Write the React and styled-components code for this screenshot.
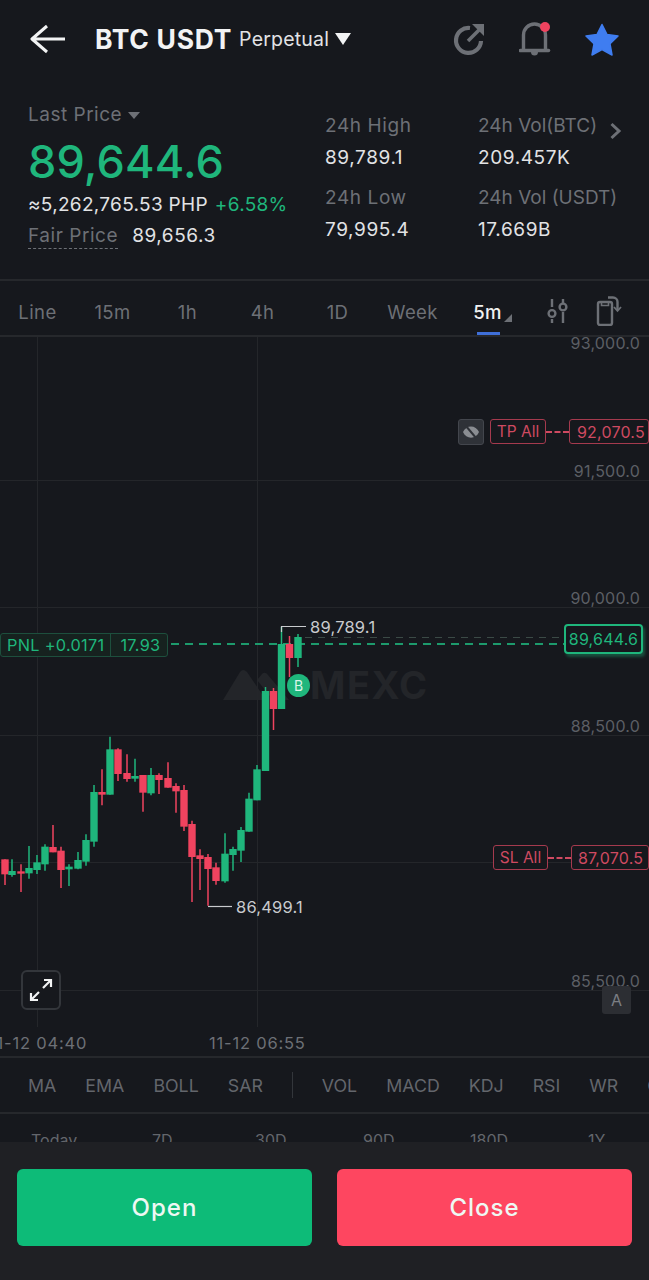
import React from "react";
import styled, { createGlobalStyle } from "styled-components";

const GREEN = "#1fb67c";
const RED = "#f0435f";
const BG = "#16181d";

const GlobalStyle = createGlobalStyle`
  html, body {
    margin: 0;
    padding: 0;
    background: ${BG};
  }
  * { box-sizing: border-box; }
`;

const Page = styled.div`
  width: 649px;
  height: 1280px;
  overflow: hidden;
  display: flex;
  flex-direction: column;
  background: ${BG};
  font-family: "Inter", "Liberation Sans", sans-serif;
  color: #e2e3e5;
`;

/* header */
const Header = styled.div`
  height: 78px;
  flex: none;
  display: flex;
  align-items: center;
  padding: 0 30px;
`;
const Title = styled.div`
  margin-left: 29px;
  font-size: 26.5px;
  font-weight: 700;
  color: #f2f3f4;
  letter-spacing: 0.7px;
`;
const Perpetual = styled.div`
  margin-left: 7px;
  font-size: 19.5px;
  letter-spacing: 0.2px;
  color: #e2e3e5;
`;
const Caret = styled.span`
  width: 0;
  height: 0;
  margin-left: 6px;
  border-left: 8.5px solid transparent;
  border-right: 8.5px solid transparent;
  border-top: 12px solid #f2f3f4;
`;
const HeaderIcons = styled.div`
  margin-left: auto;
  display: flex;
  align-items: center;
  gap: 33px;
`;

/* stats */
const Stats = styled.div`
  height: 203px;
  flex: none;
  display: flex;
  padding: 24px 0 0 28px;
  border-bottom: 2px solid #26282c;
`;
const PriceCol = styled.div`
  width: 297px;
`;
const LastPrice = styled.div`
  display: flex;
  align-items: center;
  gap: 6px;
  font-size: 19px;
  letter-spacing: 0.5px;
  line-height: 26px;
  color: #6d7076;
`;
const SmallCaret = styled.span`
  width: 0;
  height: 0;
  border-left: 6.5px solid transparent;
  border-right: 6.5px solid transparent;
  border-top: 7px solid #6d7076;
`;
const BigPrice = styled.div`
  margin-top: 7px;
  font-size: 45px;
  line-height: 54px;
  font-weight: 500;
  color: ${GREEN};
  letter-spacing: 0.2px;
`;
const FiatRow = styled.div`
  margin-top: 2px;
  display: flex;
  gap: 7px;
  font-size: 19px;
  line-height: 28px;
  white-space: nowrap;
  letter-spacing: 0.3px;
`;
const Change = styled.span`
  color: ${GREEN};
`;
const FairRow = styled.div`
  margin-top: 5px;
  display: flex;
  gap: 14px;
  font-size: 19px;
  letter-spacing: 0.55px;
  line-height: 24px;
`;
const FairLabel = styled.span`
  color: #6d7076;
  border-bottom: 1px dashed #6d7076;
`;
const StatCols = styled.div`
  display: grid;
  grid-template-columns: 153px 150px;
  grid-auto-rows: 72px;
  margin-top: 12px;
  position: relative;
`;
const Stat = styled.div`
  display: flex;
  flex-direction: column;
  gap: 8px;
  font-size: 19px;
  letter-spacing: 0.6px;
  line-height: 24px;
  white-space: nowrap;
`;
const StatLabel = styled.span`
  color: #6d7076;
  letter-spacing: ${(p) => (p.$tight ? 0 : 0.6)}px;
`;
const Chevron = styled.span`
  position: absolute;
  left: 284px;
  top: 8px;
  display: flex;
`;

/* period tabs */
const Tabs = styled.div`
  height: 56px;
  flex: none;
  display: flex;
  align-items: center;
  border-bottom: 2px solid #26282c;
`;
const Tab = styled.div`
  position: relative;
  width: 75px;
  height: 100%;
  padding-top: 8px;
  display: flex;
  align-items: center;
  justify-content: center;
  font-size: 18.5px;
  letter-spacing: 0.4px;
  color: ${(p) => (p.$active ? "#f0f1f2" : "#6d7076")};
  font-weight: ${(p) => (p.$active ? 500 : 400)};
`;
const TabMark = styled.span`
  position: absolute;
  left: 27px;
  bottom: 0;
  width: 23px;
  height: 3px;
  background: #3f6fd8;
`;
const TabCorner = styled.span`
  position: absolute;
  left: 54px;
  top: 33px;
  width: 0;
  height: 0;
  border-left: 8px solid transparent;
  border-bottom: 8px solid #6d7076;
`;
const TabIcons = styled.div`
  display: flex;
  align-items: center;
  gap: 27px;
  margin-left: 22px;
  padding-top: 6px;
`;

/* chart */
const Chart = styled.div`
  position: relative;
  height: 719px;
  flex: none;
  overflow: hidden;
`;
const PriceLabel = styled.span`
  position: absolute;
  right: 9px;
  top: ${(p) => p.$y}px;
  font-size: 16px;
  letter-spacing: 0.2px;
  line-height: 20px;
  color: #5c5f65;
`;
const TimeLabel = styled.span`
  position: absolute;
  left: ${(p) => p.$x}px;
  top: 696px;
  font-size: 16.5px;
  letter-spacing: 0.8px;
  line-height: 20px;
  color: #6d7076;
  white-space: nowrap;
`;
const Note = styled.span`
  position: absolute;
  left: ${(p) => p.$x}px;
  top: ${(p) => p.$y}px;
  font-size: 16.5px;
  letter-spacing: 0.2px;
  line-height: 20px;
  color: #c9cbce;
`;
const OrderTag = styled.span`
  position: absolute;
  left: ${(p) => p.$x}px;
  top: ${(p) => p.$y}px;
  width: ${(p) => p.$w}px;
  height: 25px;
  padding-left: ${(p) => p.$pad || 0}px;
  display: flex;
  align-items: center;
  justify-content: ${(p) => (p.$pad ? "flex-start" : "center")};
  border: 1px solid #a53a4e;
  border-radius: 3px;
  font-size: ${(p) => (p.$pad ? 16 : 15.5)}px;
  letter-spacing: ${(p) => (p.$pad ? 0.2 : 0)}px;
  color: #cf4a61;
  background: ${BG};
  white-space: nowrap;
`;
const Connector = styled.span`
  position: absolute;
  left: ${(p) => p.$x}px;
  top: ${(p) => p.$y}px;
  width: ${(p) => p.$w}px;
  border-top: 2px dashed #cf4a61;
`;
const EyeBox = styled.span`
  position: absolute;
  left: 458px;
  top: 82px;
  width: 26px;
  height: 26px;
  display: flex;
  align-items: center;
  justify-content: center;
  border: 1px solid #43464d;
  border-radius: 3px;
  background: #2f3238;
`;
const PnlTag = styled.div`
  position: absolute;
  left: 0;
  top: 296px;
  height: 24px;
  display: flex;
  align-items: center;
  border: 1px solid #1d4f3d;
  border-radius: 3px;
  background: #16221f;
  font-size: 16.3px;
  letter-spacing: 0.3px;
  color: ${GREEN};
  white-space: nowrap;
`;
const PnlCell = styled.span`
  padding: 0 6px;
  line-height: 22px;
  & + & {
    padding: 0 7px 0 9px;
    border-left: 1px solid #1d4f3d;
  }
`;
const LastTag = styled.span`
  position: absolute;
  left: 564px;
  top: 287px;
  width: 79px;
  height: 30px;
  display: flex;
  align-items: center;
  justify-content: center;
  border: 2px solid ${GREEN};
  border-radius: 4px;
  background: ${BG};
  box-shadow: 2px 3px 3px rgba(31, 182, 124, 0.35);
  font-size: 16px;
  letter-spacing: 0.2px;
  color: ${GREEN};
`;
const BuyDot = styled.span`
  position: absolute;
  left: 287px;
  top: 337px;
  width: 23px;
  height: 23px;
  display: flex;
  align-items: center;
  justify-content: center;
  border-radius: 50%;
  background: ${GREEN};
  color: #d9f5ea;
  font-size: 14px;
`;
const Watermark = styled.div`
  position: absolute;
  left: 223px;
  top: 330px;
  display: flex;
  align-items: center;
  gap: 19px;
  color: #232529;
  font-size: 38px;
  line-height: 36px;
  font-weight: 700;
  letter-spacing: 1.5px;
`;
const ExpandBtn = styled.span`
  position: absolute;
  left: 21px;
  top: 633px;
  width: 40px;
  height: 40px;
  display: flex;
  align-items: center;
  justify-content: center;
  border: 2px solid #33363b;
  border-radius: 6px;
  background: ${BG};
`;
const AutoBtn = styled.span`
  position: absolute;
  left: 602px;
  top: 649px;
  width: 29px;
  height: 28px;
  display: flex;
  align-items: center;
  justify-content: center;
  border-radius: 3px;
  background: #2c2e33;
  color: #7b7e84;
  font-size: 16px;
`;

/* indicators */
const Indicators = styled.div`
  height: 58px;
  flex: none;
  display: flex;
  align-items: center;
  gap: 29px;
  padding-left: 28px;
  border-top: 2px solid #26282c;
  border-bottom: 2px solid #26282c;
  overflow: hidden;
  font-size: 17.8px;
  color: #63666c;
  white-space: nowrap;
`;
const Divider = styled.span`
  width: 1px;
  height: 26px;
  flex: none;
  background: #33363b;
`;

/* range row, cut off by the bottom bar */
const Ranges = styled.div`
  height: 28px;
  flex: none;
  overflow: hidden;
  position: relative;
  font-size: 16px;
  color: #63666c;
`;
const Range = styled.span`
  position: absolute;
  left: ${(p) => p.$x}px;
  top: 16px;
  line-height: 20px;
`;

/* bottom bar */
const Footer = styled.div`
  flex: 1;
  display: flex;
  gap: 25px;
  padding: 27px 17px 34px;
  background: #1f2024;
`;
const Action = styled.div`
  flex: 1;
  display: flex;
  align-items: center;
  justify-content: center;
  border-radius: 6px;
  background: ${(p) => p.$bg};
  color: #eef8f3;
  font-size: 24px;
  font-weight: 500;
  letter-spacing: 1px;
`;

const candles = [
  // x, wick top, body top, body bottom, wick bottom, up (chart px)
  [5, 388, 388, 433, 465, 0], [12, 388, 423, 435, 440, 1], [21, 403, 424, 431, 486, 0],
  [29, 348, 414, 430, 446, 1], [37, 375, 397, 420, 432, 1], [45, 343, 350, 403, 422, 1],
  [53, 285, 351, 367, 367, 0], [61, 350, 362, 420, 474, 0], [69, 403, 410, 418, 468, 1],
  [78, 366, 390, 416, 418, 1], [86, 313, 330, 395, 407, 1], [94, 165, 186, 335, 350, 1],
  [102, 118, 186, 194, 226, 0], [110, 20, 58, 194, 194, 1], [118, 55, 58, 132, 153, 0],
  [127, 73, 129, 147, 155, 0], [135, 86, 138, 146, 155, 1], [143, 135, 135, 188, 245, 0],
  [151, 114, 135, 190, 196, 1], [159, 130, 135, 150, 192, 0], [168, 97, 144, 173, 173, 0],
  [176, 160, 168, 184, 248, 0], [184, 165, 180, 290, 303, 0], [192, 272, 282, 381, 516, 0],
  [200, 358, 376, 387, 480, 0], [208, 372, 381, 417, 527, 0], [216, 398, 412, 453, 464, 0],
  [225, 310, 371, 454, 458, 1], [233, 350, 357, 375, 422, 1], [241, 291, 300, 362, 396, 1],
  [249, 188, 206, 305, 305, 1], [257, 105, 118, 211, 211, 1],
].map(([x, wt, bt, bb, wb, up]) => ({
  x,
  wt: wt / 3 + 393,
  bt: bt / 3 + 393,
  bb: bb / 3 + 393,
  wb: wb / 3 + 393,
  up,
})).concat([
  { x: 265.5, wt: 350, bt: 354, bb: 434, wb: 434, up: 1 },
  { x: 273.5, wt: 351, bt: 354, bb: 372, wb: 393, up: 0 },
  { x: 281.5, wt: 290, bt: 307, bb: 372, wb: 372, up: 1 },
  { x: 289.5, wt: 299, bt: 307, bb: 321, wb: 340, up: 0 },
  { x: 298, wt: 297, bt: 300, bb: 321, wb: 330, up: 1 },
]);

function CandleChart() {
  return (
    <svg width="649" height="719" style={{ display: "block", position: "absolute", left: 0, top: 0 }}>
      {[143, 270, 398, 525, 653].map((y) => (
        <line key={y} x1="0" x2="649" y1={y + 0.5} y2={y + 0.5} stroke="#24262a" />
      ))}
      {[37, 257].map((x) => (
        <line key={x} x1={x + 0.5} x2={x + 0.5} y1="0" y2="690" stroke="#24262a" />
      ))}
      <line x1="305" x2="564" y1="300.5" y2="300.5" stroke="#3b4a46" strokeWidth="1.2" strokeDasharray="7 6" />
      <line x1="171" x2="564" y1="307" y2="307" stroke="#1d9a6c" strokeWidth="2" strokeDasharray="8 6" />
      {candles.map((c) => {
        const col = c.up ? GREEN : RED;
        return (
          <g key={c.x}>
            <line x1={c.x} x2={c.x} y1={c.wt} y2={c.wb} stroke={col} strokeWidth="1.5" />
            <rect x={c.x - 3.7} y={c.bt} width="7.4" height={Math.max(c.bb - c.bt, 2)} fill={col} />
          </g>
        );
      })}
      <path d="M281.5 295 V289.5 H306" fill="none" stroke="#c9cbce" strokeWidth="1.2" />
      <path d="M208 569.5 H232" fill="none" stroke="#c9cbce" strokeWidth="1.2" />
    </svg>
  );
}

function BackIcon() {
  return (
    <svg width="36" height="30" viewBox="0 0 36 30">
      <path d="M35 15 H3 M17 2 L2 15 L17 28" fill="none" stroke="#f2f3f4" strokeWidth="3" strokeLinejoin="round" />
    </svg>
  );
}

function ShareIcon() {
  return (
    <svg width="33" height="34" viewBox="0 0 33 34" fill="none">
      <path d="M17 6 A12.5 12.5 0 1 0 28 19" stroke="#6d7076" strokeWidth="4.2" />
      <path d="M15 19 L28 6" stroke="#6d7076" strokeWidth="3.6" />
      <path d="M19 2 H31 V14 Z" fill="#6d7076" />
    </svg>
  );
}

function BellIcon() {
  return (
    <svg width="33" height="36" viewBox="0 0 33 36" fill="none">
      <path d="M4.5 29 V14 A11 11 0 0 1 26.5 14 V29" stroke="#6d7076" strokeWidth="3.4" />
      <path d="M1.5 29.5 H29.5" stroke="#6d7076" strokeWidth="3.6" strokeLinecap="round" />
      <path d="M12 31 A3.5 3.5 0 0 0 19 31 Z" fill="#6d7076" />
      <circle cx="26" cy="6" r="5" fill="#f0435f" />
    </svg>
  );
}

function StarIcon() {
  return (
    <svg width="34" height="33" viewBox="0 0 34 33">
      <path
        d="M17 1.5 L22 11.5 L33 13 L25 20.8 L27 32 L17 26.6 L7 32 L9 20.8 L1 13 L12 11.5 Z"
        fill="#3f7df0"
        stroke="#3f7df0"
        strokeWidth="1.5"
        strokeLinejoin="round"
      />
    </svg>
  );
}

function SlidersIcon() {
  return (
    <svg width="22" height="26" viewBox="0 0 22 26" fill="none" stroke="#6d7076" strokeWidth="2.4">
      <path d="M5 1 V9 M5 21 V25 M16 1 V5 M16 14 V25" />
      <circle cx="5" cy="15.5" r="3.4" />
      <circle cx="16" cy="9" r="3.4" />
    </svg>
  );
}

function RotateIcon() {
  return (
    <svg width="26" height="30" viewBox="0 0 26 30" fill="none" stroke="#6d7076" strokeWidth="2.4">
      <rect x="2" y="6" width="14" height="23" rx="2" />
      <path d="M5.5 6 V9.5 H12.5 V6" strokeWidth="1.6" />
      <path d="M12 1.5 H17 A4.5 4.5 0 0 1 21.5 6 V14" />
      <path d="M18 11 L21.5 15 L25 11" strokeWidth="1.8" />
    </svg>
  );
}

function HiddenEye() {
  return (
    <svg width="18" height="18" viewBox="0 0 18 18" fill="none">
      <path d="M1 9 C4 1.5 14 1.5 17 9 C14 16.5 4 16.5 1 9 Z" fill="#8a8d92" />
      <path d="M3.5 2.5 L14.5 15.5" stroke="#2f3238" strokeWidth="2" />
    </svg>
  );
}

function ExpandIcon() {
  return (
    <svg width="26" height="26" viewBox="0 0 26 26" fill="none" stroke="#f2f3f4" strokeWidth="2.2">
      <path d="M15 11 L23 3 M16 3 H23 V10" />
      <path d="M11 15 L3 23 M3 16 V23 H10" />
    </svg>
  );
}

function MexcMark() {
  return (
    <svg width="68" height="32" viewBox="0 0 68 32">
      <path d="M0 31 L17 3 Q20 -1 24 3 L43 31 Z" fill="#232529" />
      <path d="M34 11 L39 5 Q42 2 45 6 L66 31 H50 Z" fill="#232529" />
    </svg>
  );
}

const Periods = ["Line", "15m", "1h", "4h", "1D", "Week"];
const StatItems = [
  ["24h High", "89,789.1"],
  ["24h Vol(BTC)", "209.457K", true],
  ["24h Low", "79,995.4"],
  ["24h Vol (USDT)", "17.669B", true],
];

export default function App() {
  return (
    <Page>
      <GlobalStyle />
      <Header>
        <BackIcon />
        <Title>BTC USDT</Title>
        <Perpetual>Perpetual</Perpetual>
        <Caret />
        <HeaderIcons>
          <ShareIcon />
          <BellIcon />
          <StarIcon />
        </HeaderIcons>
      </Header>

      <Stats>
        <PriceCol>
          <LastPrice>
            Last Price <SmallCaret />
          </LastPrice>
          <BigPrice>89,644.6</BigPrice>
          <FiatRow>
            <span>≈5,262,765.53 PHP</span>
            <Change>+6.58%</Change>
          </FiatRow>
          <FairRow>
            <FairLabel>Fair Price</FairLabel>
            <span>89,656.3</span>
          </FairRow>
        </PriceCol>
        <StatCols>
          {StatItems.map(([label, value, tight]) => (
            <Stat key={label}>
              <StatLabel $tight={tight}>{label}</StatLabel>
              <span>{value}</span>
            </Stat>
          ))}
          <Chevron>
            <svg width="13" height="18" viewBox="0 0 13 18" fill="none">
              <path d="M2.5 2 L10 9 L2.5 16" stroke="#6d7076" strokeWidth="3" />
            </svg>
          </Chevron>
        </StatCols>
      </Stats>

      <Tabs>
        {Periods.map((p) => (
          <Tab key={p}>{p}</Tab>
        ))}
        <Tab $active>
          5m
          <TabCorner />
          <TabMark />
        </Tab>
        <TabIcons>
          <SlidersIcon />
          <RotateIcon />
        </TabIcons>
      </Tabs>

      <Chart>
        <Watermark>
          <MexcMark />
          MEXC
        </Watermark>
        <CandleChart />
        <PriceLabel $y={-4}>93,000.0</PriceLabel>
        <PriceLabel $y={124}>91,500.0</PriceLabel>
        <PriceLabel $y={251}>90,000.0</PriceLabel>
        <PriceLabel $y={379}>88,500.0</PriceLabel>
        <PriceLabel $y={634}>85,500.0</PriceLabel>

        <EyeBox>
          <HiddenEye />
        </EyeBox>
        <OrderTag $x={490} $y={82} $w={56}>TP All</OrderTag>
        <Connector $x={546} $y={94} $w={23} />
        <OrderTag $x={569} $y={82} $w={80} $pad={7}>92,070.5</OrderTag>
        <OrderTag $x={493} $y={508} $w={55}>SL All</OrderTag>
        <Connector $x={548} $y={520} $w={23} />
        <OrderTag $x={571} $y={508} $w={78} $pad={6}>87,070.5</OrderTag>

        <PnlTag>
          <PnlCell>PNL +0.0171</PnlCell>
          <PnlCell>17.93</PnlCell>
        </PnlTag>
        <LastTag>89,644.6</LastTag>
        <BuyDot>B</BuyDot>
        <Note $x={310} $y={280}>89,789.1</Note>
        <Note $x={236} $y={560}>86,499.1</Note>

        <ExpandBtn>
          <ExpandIcon />
        </ExpandBtn>
        <AutoBtn>A</AutoBtn>
        <TimeLabel $x={-11}>11-12 04:40</TimeLabel>
        <TimeLabel $x={209}>11-12 06:55</TimeLabel>
      </Chart>

      <Indicators>
        <span>MA</span>
        <span>EMA</span>
        <span>BOLL</span>
        <span>SAR</span>
        <Divider />
        <span>VOL</span>
        <span>MACD</span>
        <span>KDJ</span>
        <span>RSI</span>
        <span>WR</span>
        <span>CCI</span>
      </Indicators>

      <Ranges>
        <Range $x={31}>Today</Range>
        <Range $x={152}>7D</Range>
        <Range $x={255}>30D</Range>
        <Range $x={363}>90D</Range>
        <Range $x={470}>180D</Range>
        <Range $x={588}>1Y</Range>
      </Ranges>

      <Footer>
        <Action $bg="#0dbb78">Open</Action>
        <Action $bg="#fe4660">Close</Action>
      </Footer>
    </Page>
  );
}
